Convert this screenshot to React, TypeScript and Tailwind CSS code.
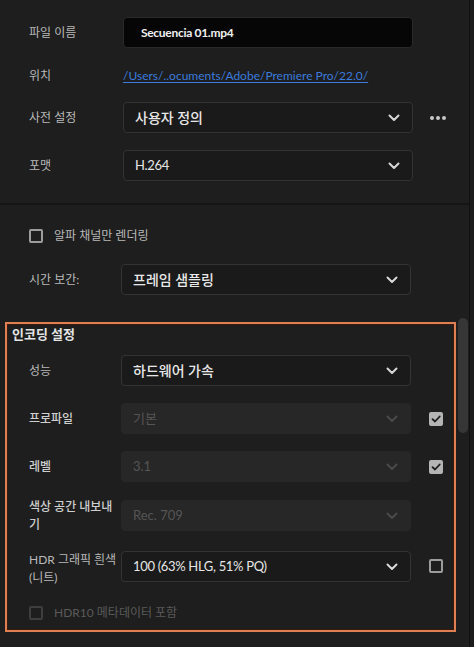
import React from "react";

const Chevron = ({ dim = false }: { dim?: boolean }) => (
  <svg width="12" height="8" viewBox="0 0 12 8" className="shrink-0">
    <path d="M1.5 1.5 L6 6 L10.5 1.5" fill="none" stroke={dim ? "#4a4a4a" : "#d8d8d8"} strokeWidth="2" strokeLinecap="round" strokeLinejoin="round" />
  </svg>
);

const Select = ({ value, cls = "", big = false, disabled = false }: { value: string; cls?: string; big?: boolean; disabled?: boolean }) => (
  <div
    className={
      "w-[290px] h-[31px] rounded-[4px] flex items-center justify-between pl-[11px] pr-[12px] " +
      (disabled ? "bg-[#272727] border border-[#272727] " : "bg-[#1a1a1a] border border-[#333333] ") +
      cls
    }
  >
    <span
      className={
        (disabled
          ? "text-[13px] text-[#555555]"
          : big
          ? "text-[14px] text-[#e8e8e8] font-medium"
          : "text-[13px] text-[#e6e6e6] tracking-tight") + " leading-none"
      }
    >
      {value}
    </span>
    <Chevron dim={disabled} />
  </div>
);

const Label = ({ children, cls = "" }: { children: React.ReactNode; cls?: string }) => (
  <div className={"w-[92px] text-[12px] leading-[18px] " + (cls || "text-[#b9b9b9]")}>{children}</div>
);

const CheckOn = () => (
  <div className="w-[14px] h-[14px] rounded-[2px] bg-[#b4b4b4] flex items-center justify-center">
    <svg width="10" height="8" viewBox="0 0 10 8">
      <path d="M1.5 4.2 L4 6.5 L8.7 1.5" fill="none" stroke="#1a1a1a" strokeWidth="1.8" strokeLinecap="round" strokeLinejoin="round" />
    </svg>
  </div>
);

const CheckOff = ({ dim = false }: { dim?: boolean }) => (
  <div className={"w-[14px] h-[14px] rounded-[2px] border-2 " + (dim ? "border-[#3e3e3e]" : "border-[#9c9c9c]")} />
);

export default function App() {
  return (
    <div
      className="w-[474px] h-[647px] bg-[#1e1e1e] overflow-hidden flex"
      style={{ fontFamily: 'Lato, "Noto Sans CJK KR", sans-serif' }}
    >
      <div className="w-[470px] shrink-0 border-r border-[#101010] flex flex-col relative">
        {/* Top section */}
        <div className="pt-[17px] pb-[22px] pl-[29px] border-b-2 border-[#151515]">
          <div className="flex items-center h-[31px]">
            <div className="mr-[2px]"><Label>파일 이름</Label></div>
            <div className="w-[290px] h-[31px] rounded-[4px] bg-[#060606] border border-[#2a2a2a] flex items-center pl-[17px]">
              <span className="text-[12px] font-bold tracking-tight text-[#f0f0f0] leading-none">Secuencia 01.mp4</span>
            </div>
          </div>
          <div className="flex items-center h-[22px] mt-[17px]">
            <div className="mr-[2px]"><Label>위치</Label></div>
            <span className="text-[12px] text-[#3b7bdc] underline underline-offset-2 leading-none">
              /Users/..ocuments/Adobe/Premiere Pro/22.0/
            </span>
          </div>
          <div className="flex items-center h-[31px] mt-[15px]">
            <div className="mr-[2px]"><Label>사전 설정</Label></div>
            <Select value="사용자 정의" big />
            <div className="ml-[17px] flex gap-[2px]">
              <span className="w-[4px] h-[4px] rounded-full bg-[#c8c8c8]" />
              <span className="w-[4px] h-[4px] rounded-full bg-[#c8c8c8]" />
              <span className="w-[4px] h-[4px] rounded-full bg-[#c8c8c8]" />
            </div>
          </div>
          <div className="flex items-center h-[31px] mt-[17px]">
            <div className="mr-[2px]"><Label>포맷</Label></div>
            <Select value="H.264" />
          </div>
        </div>

        {/* Bottom section */}
        <div className="pl-[29px] pt-[24px]">
          <div className="flex items-center h-[14px]">
            <CheckOff />
            <span className="ml-[11px] text-[12px] text-[#b9b9b9] leading-none">알파 채널만 렌더링</span>
          </div>
          <div className="flex items-center h-[31px] mt-[21px]">
            <Label>시간 보간:</Label>
            <Select value="프레임 샘플링" big />
          </div>
        </div>

        <div className="ml-[5px] mt-[27px] w-[451px] h-[310px] border-2 border-[#e07f52] shadow-[inset_0_0_0_1px_#3a1a10] pl-[5px] pt-[1px]">
          <div className="text-[13px] font-bold text-[#e4e4e4] leading-[18px]">인코딩 설정</div>
          <div className="pl-[17px]">
            <div className="flex items-center h-[31px] mt-[12px]">
              <Label>성능</Label>
              <Select value="하드웨어 가속" big />
            </div>
            <div className="flex items-center h-[31px] mt-[17px]">
              <Label cls="text-[#cfcfcf] font-medium">프로파일</Label>
              <Select value="기본" disabled />
              <div className="ml-[18px]"><CheckOn /></div>
            </div>
            <div className="flex items-center h-[31px] mt-[17px]">
              <Label cls="text-[#cfcfcf] font-medium">레벨</Label>
              <Select value="3.1" disabled />
              <div className="ml-[18px]"><CheckOn /></div>
            </div>
            <div className="flex items-center h-[31px] mt-[18px]">
              <Label cls="text-[#cfcfcf] font-medium">색상 공간 내보내기</Label>
              <Select value="Rec. 709" disabled />
            </div>
            <div className="flex h-[31px] mt-[20px]">
              <Label>HDR 그래픽 흰색 (니트)</Label>
              <Select value="100 (63% HLG, 51% PQ)" />
              <div className="ml-[18px] pt-[8px]"><CheckOff /></div>
            </div>
            <div className="flex items-center h-[14px] mt-[24px]">
              <CheckOff dim />
              <span className="ml-[11px] text-[12px] text-[#5a5a5a] leading-none">HDR10 메타데이터 포함</span>
            </div>
          </div>
        </div>

        {/* scrollbar thumb */}
        <div className="absolute left-[458px] top-[318px] w-[10px] h-[115px] rounded-full bg-[#363636]" />
      </div>
      <div className="flex-1 bg-[#1c1c1c]" />
    </div>
  );
}
